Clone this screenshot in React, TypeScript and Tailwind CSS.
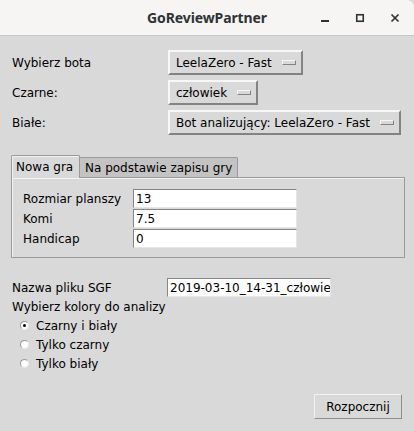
import React from "react";

const raised = "border-2 border-t-[#f7f7f7] border-l-[#f7f7f7] border-b-[#838383] border-r-[#838383]";

function OptionMenu({ label, width }: { label: string; width: string }) {
    return (
        <div className={`${raised} ${width} h-[25px] bg-[#d9d9d9] flex items-center justify-between pl-[6px] pr-[5px]`}>
            <span className="whitespace-nowrap leading-none">{label}</span>
            <span className="w-[14px] h-[5px] border border-t-[#f7f7f7] border-l-[#f7f7f7] border-b-[#838383] border-r-[#838383] bg-[#d9d9d9]" />
        </div>
    );
}

function Entry({ value, width = "w-[164px]" }: { value: string; width?: string }) {
    return (
        <div className={`${width} h-[19px] bg-white border border-t-[#868686] border-l-[#868686] border-b-[#e6e6e6] border-r-[#e6e6e6] pl-[2px] flex items-center overflow-hidden whitespace-nowrap leading-none`}>
            {value}
        </div>
    );
}

function Radio({ label, checked }: { label: string; checked?: boolean }) {
    return (
        <div className="h-[19px] flex items-center pl-[8px] gap-[7px]">
            <span className="w-[9px] h-[9px] rounded-full bg-white border border-t-[#9a9a9a] border-l-[#9a9a9a] border-b-[#e8e8e8] border-r-[#e8e8e8] flex items-center justify-center">
                {checked && <span className="w-[3px] h-[3px] rounded-full bg-black" />}
            </span>
            <span className="leading-none">{label}</span>
        </div>
    );
}

export default function App() {
    return (
        <div className="w-[414px] h-[431px] bg-[#d9d9d9] flex flex-col font-['DejaVu_Sans',sans-serif] text-[12px] text-black overflow-hidden">
            <div className="h-[36px] shrink-0 bg-[#f6f5f4] border-b border-[#c9c7c5] rounded-tr-[7px] grid grid-cols-[1fr_auto_1fr] items-center">
                <div />
                <div className="font-['Noto_Sans',sans-serif] font-bold text-[14px] text-[#2e3436] tracking-[-0.1px]">GoReviewPartner</div>
                <div className="flex items-center justify-end gap-[25px] pr-[14px] text-[#2e3436]">
                    <svg width="10" height="10" viewBox="0 0 10 10"><rect x="1" y="7" width="8" height="2" fill="currentColor" /></svg>
                    <svg width="10" height="10" viewBox="0 0 10 10"><rect x="1.75" y="1.75" width="6.5" height="6.5" fill="none" stroke="currentColor" strokeWidth="1.6" /></svg>
                    <svg width="10" height="10" viewBox="0 0 10 10"><path d="M1.5 1.5 L8.5 8.5 M8.5 1.5 L1.5 8.5" stroke="currentColor" strokeWidth="1.7" /></svg>
                </div>
            </div>

            <div className="flex flex-col pl-[12px] pr-[12px] pt-[14px]">
                <div className="grid grid-cols-[156px_auto] gap-y-[5px] items-center">
                    <span>Wybierz bota</span>
                    <OptionMenu label="LeelaZero - Fast" width="w-[135px]" />
                    <span>Czarne:</span>
                    <OptionMenu label="człowiek" width="w-[90px]" />
                    <span>Białe:</span>
                    <OptionMenu label="Bot analizujący: LeelaZero - Fast" width="w-[233px]" />
                </div>

                <div className="mt-[20px] -ml-px w-[394px] flex flex-col">
                    <div className="flex items-end h-[22px]">
                        <div className="relative z-10 w-[69px] h-[23px] -mb-px bg-[#d9d9d9] border border-b-0 border-[#9a9a9a] rounded-t-[2px] shadow-[inset_1px_1px_0_#f2f2f2] pl-[4px] flex items-center">
                            Nowa gra
                        </div>
                        <div className="w-[158px] h-[20px] bg-[#c3c3c3] border border-l-0 border-b-0 border-[#9a9a9a] rounded-tr-[2px] pl-[5px] flex items-center">
                            Na podstawie zapisu gry
                        </div>
                    </div>
                    <div className="h-[81px] border border-[#9a9a9a] shadow-[inset_1px_1px_0_#f2f2f2] pt-[11px] pl-[11px]">
                        <div className="grid grid-cols-[110px_auto] gap-y-[1px] items-center">
                            <span>Rozmiar planszy</span>
                            <Entry value="13" />
                            <span>Komi</span>
                            <Entry value="7.5" />
                            <span>Handicap</span>
                            <Entry value="0" />
                        </div>
                    </div>
                </div>

                <div className="mt-[20px] grid grid-cols-[155px_auto] items-center">
                    <span>Nazwa pliku SGF</span>
                    <Entry value="2019-03-10_14-31_człowiek" />
                </div>
                <div className="h-[19px] flex items-center">Wybierz kolory do analizy</div>
                <Radio label="Czarny i biały" checked />
                <Radio label="Tylko czarny" />
                <Radio label="Tylko biały" />

                <div className="mt-[21px] flex justify-end">
                    <button className="w-[88px] h-[25px] bg-[#d9d9d9] border border-t-[#f2f2f2] border-l-[#f2f2f2] border-b-[#8e8e8e] border-r-[#8e8e8e] flex items-center justify-center">
                        Rozpocznij
                    </button>
                </div>
            </div>
        </div>
    );
}
